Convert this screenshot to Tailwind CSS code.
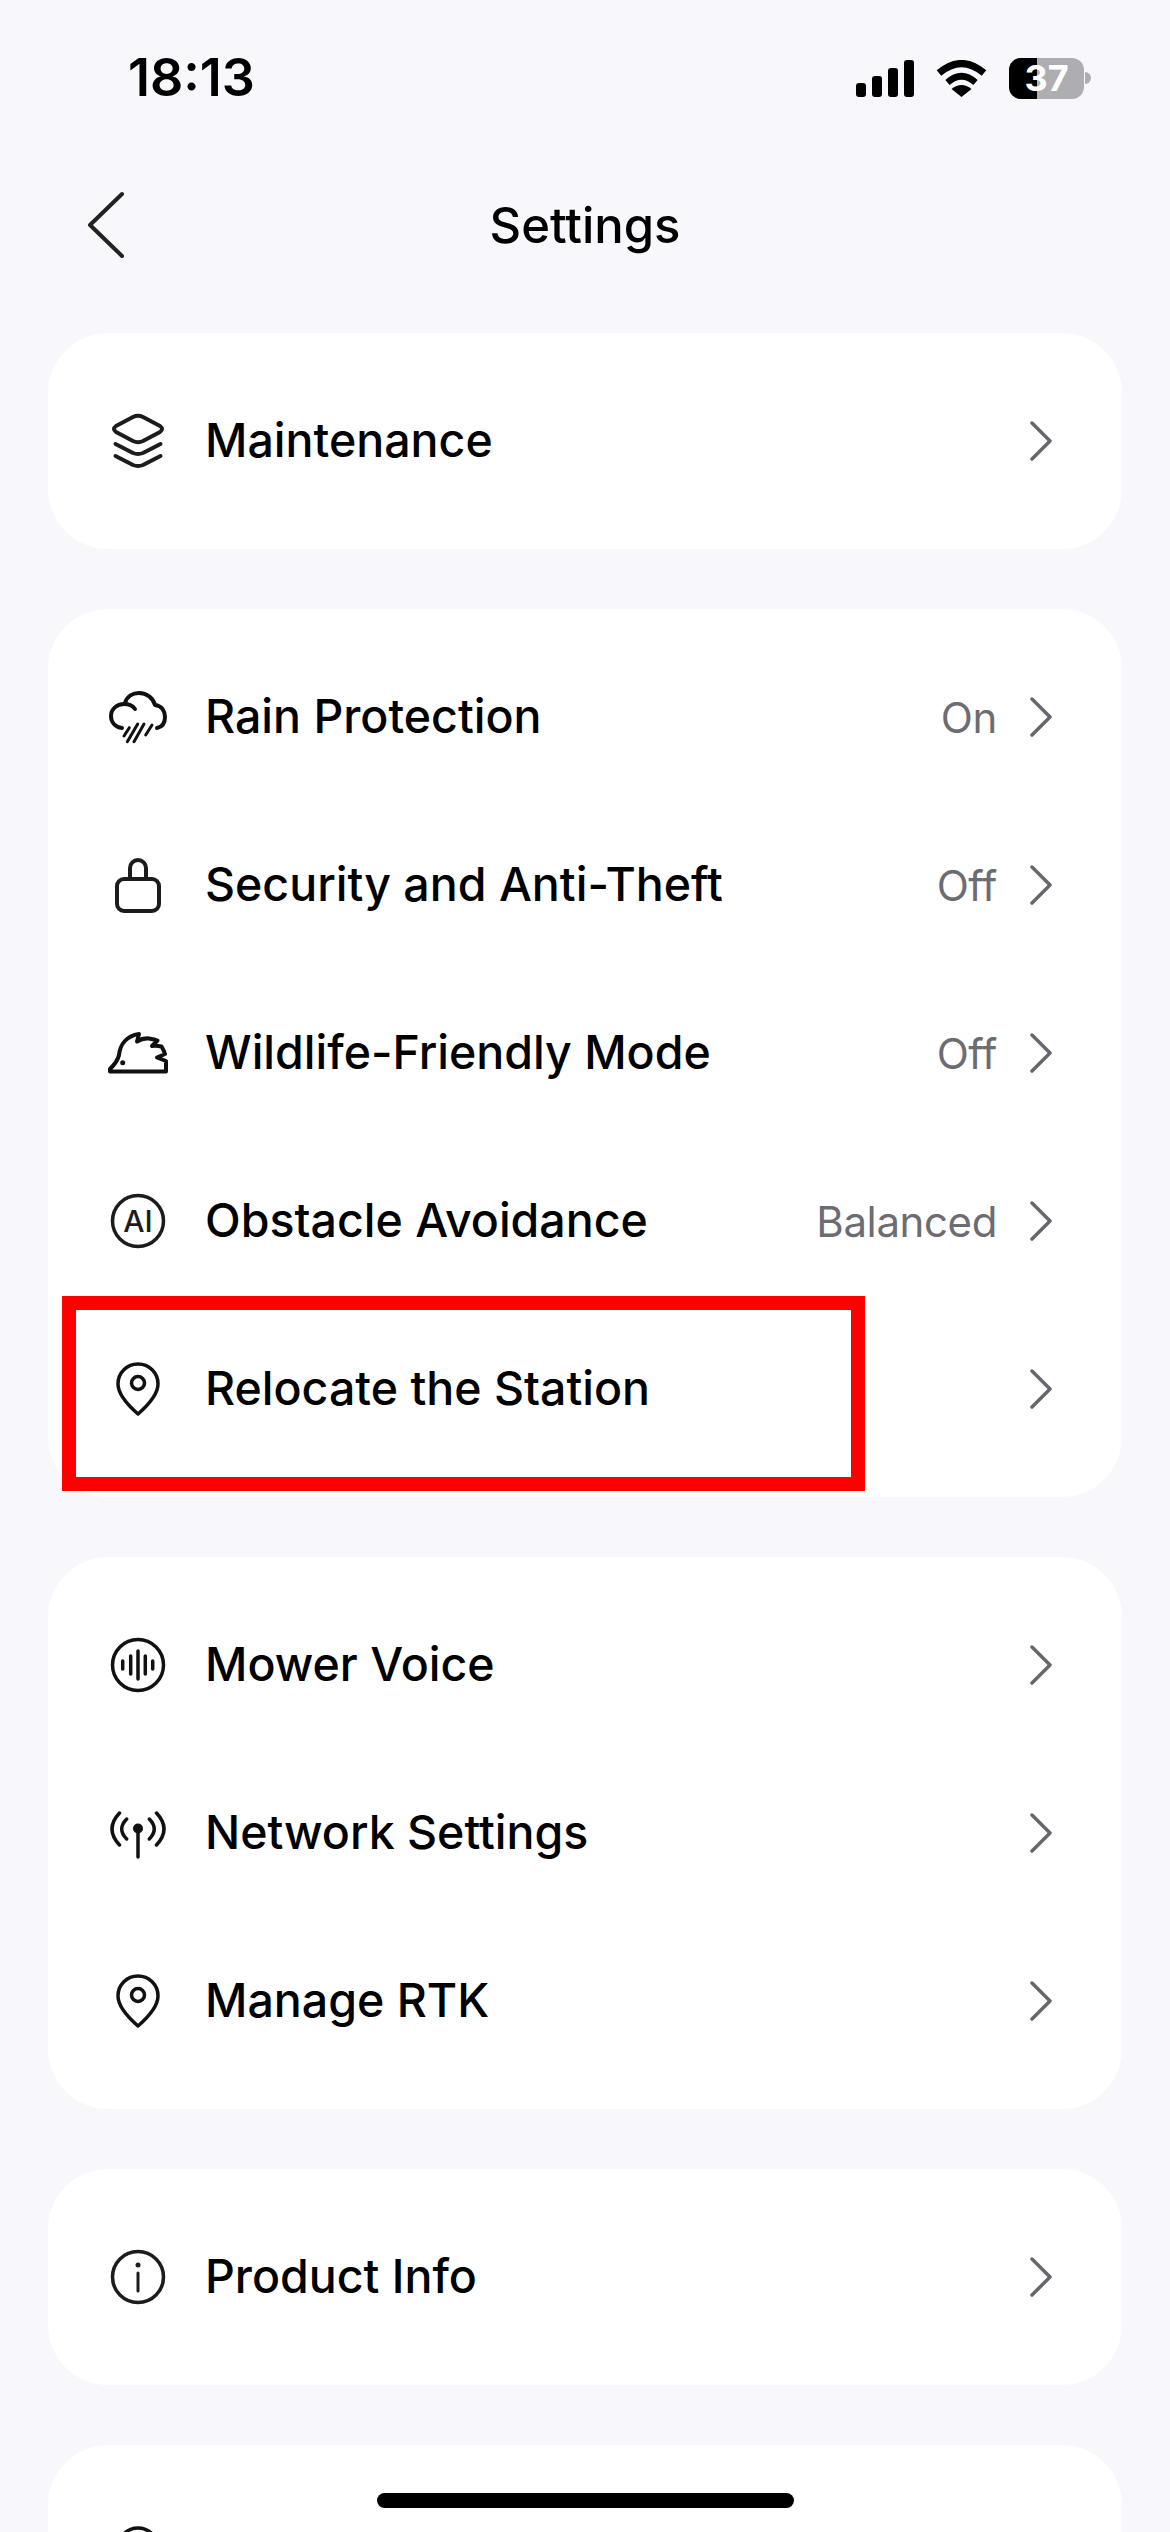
<!DOCTYPE html>
<html lang="en">
<head>
  <meta charset="UTF-8" />
  <meta name="viewport" content="width=device-width, initial-scale=1.0"/>
  <title>Settings</title>
  <script src="https://cdn.jsdelivr.net/npm/@tailwindcss/browser@4"></script>
</head>
<body class="bg-[#f7f7fc] font-[Inter,sans-serif] text-black">
<div class="relative w-[1170px] h-[2532px] overflow-hidden">

  <!-- Status bar -->
  <div class="h-[156px] flex items-center justify-between pl-[128px] pr-[79px]">
    <span class="text-[52px] font-semibold text-black">18:13</span>
    <div class="flex items-center gap-[22px]">
      <div class="flex items-end gap-[6px]">
        <div class="w-[10px] h-[14px] rounded-[3px] bg-black"></div>
        <div class="w-[10px] h-[21px] rounded-[3px] bg-black"></div>
        <div class="w-[10px] h-[29px] rounded-[3px] bg-black"></div>
        <div class="w-[10px] h-[37px] rounded-[3px] bg-black"></div>
      </div>
      <svg width="51" height="37" viewBox="0 0 51 37" fill="none" stroke="black">
        <path d="M3 13 Q25.5 -6 48 13" stroke-width="7"/>
        <path d="M11.5 22.5 Q25.5 10 39.500 22.500" stroke-width="6.500"/>
        <path d="M25.500 37 L15.500 29 Q25.500 21 35.500 29 Z" fill="black" stroke="none"/>
      </svg>
      <div class="flex items-center gap-[1px]">
        <div class="relative w-[75px] h-[41px] rounded-[12px] overflow-hidden bg-[#aeaeb2]">
          <div class="w-[28px] h-full bg-black"></div>
          <span class="absolute inset-0 flex items-center justify-center text-[36px] leading-none font-bold text-white">37</span>
        </div>
        <div class="w-[6px] h-[12px] rounded-r-full bg-[#aeaeb2]"></div>
      </div>
    </div>
  </div>

  <!-- Nav bar -->
  <div class="relative h-[140px] mb-[37px] flex items-center justify-center">
    <svg class="absolute left-[84px] top-[32px]" width="44" height="76" viewBox="0 0 44 76" fill="none" stroke="#222" stroke-width="4" stroke-linecap="round" stroke-linejoin="round">
      <path d="M38 6 L6 37 L38 68"/>
    </svg>
    <h1 class="text-[49px] font-medium text-black">Settings</h1>
  </div>

  <!-- Cards -->
  <div class="flex flex-col gap-[60px] px-[48px]">

    <div class="bg-white rounded-[60px] py-[24px]">
      <div class="h-[168px] flex items-center pl-[58px] pr-[70px]">
        <svg class="mr-[35px]" width="64" height="64" viewBox="0 0 64 64" fill="none" stroke="#1c1c1c" stroke-width="4" stroke-linecap="round" stroke-linejoin="round">
          <path d="M27 8 Q32 5.500 37 8 L54 17 Q58 20 54 23 L37 32 Q32 34.500 27 32 L10 23 Q6 20 10 17 Z"/>
          <path d="M9.500 35 L27 44 Q32 46 37 44 L54.500 35"/>
          <path d="M9.500 47 L27 56 Q32 58 37 56 L54.500 47"/>
        </svg>
        <span class="flex-1 text-[46.5px] font-[450]">Maintenance</span>
        <svg width="22" height="40" viewBox="0 0 22 40" fill="none" stroke="#66666c" stroke-width="3.500" stroke-linecap="round" stroke-linejoin="round"><path d="M2 2 L20 20 L2 38"/></svg>
      </div>
    </div>

    <div class="relative bg-white rounded-[60px] py-[24px]">
      <div class="h-[168px] flex items-center pl-[58px] pr-[70px]">
        <svg class="mr-[35px]" width="64" height="64" viewBox="0 0 64 64" fill="none" stroke="#111" stroke-width="4" stroke-linecap="round" stroke-linejoin="round">
          <path d="M16 43 C9 42 5 37 5 31 C5 24 11 19 18 19 C23 19 27 21 29 24"/>
          <path d="M19 18 C21 11 27 8 33 8 C41 8 47 13 49 20 C56 21 59 26 59 32 C59 38 56 42 51 43"/>
          <path d="M18 51 L23.300 42.700 M21.300 56.700 L31.700 39 M28 56.700 L38 39 M39.700 50 L46 40" stroke-width="3"/>
        </svg>
        <span class="flex-1 text-[46.5px] font-[450]">Rain Protection</span>
        <span class="mr-[33px] text-[42px] tracking-[-0.4px] text-[#6c6c72]">On</span>
        <svg width="22" height="40" viewBox="0 0 22 40" fill="none" stroke="#66666c" stroke-width="3.500" stroke-linecap="round" stroke-linejoin="round"><path d="M2 2 L20 20 L2 38"/></svg>
      </div>
      <div class="h-[168px] flex items-center pl-[58px] pr-[70px]">
        <svg class="mr-[35px]" width="64" height="64" viewBox="0 0 64 64" fill="none" stroke="#1c1c1c" stroke-width="4" stroke-linecap="round" stroke-linejoin="round">
          <rect x="11" y="26" width="42" height="32" rx="7"/>
          <path d="M24 26 V15 a8 8 0 0 1 16 0 V26"/>
        </svg>
        <span class="flex-1 text-[46.5px] font-[450]">Security and Anti-Theft</span>
        <span class="mr-[33px] text-[42px] tracking-[-0.4px] text-[#6c6c72]">Off</span>
        <svg width="22" height="40" viewBox="0 0 22 40" fill="none" stroke="#66666c" stroke-width="3.500" stroke-linecap="round" stroke-linejoin="round"><path d="M2 2 L20 20 L2 38"/></svg>
      </div>
      <div class="h-[168px] flex items-center pl-[58px] pr-[70px]">
        <svg class="mr-[35px]" width="64" height="64" viewBox="0 0 64 64" fill="none" stroke="#111" stroke-width="4" stroke-linecap="round" stroke-linejoin="round">
          <path d="M4 50.500 L4 48 C9 43 12 39 13 34 C14 24 20 15 33 13 L31 20.500 C35 18 39 17 43 17.500 C46 18 49 18.500 51.500 19.500 L46 25 C50 24.500 53 25 55.500 25.500 C57 28 58.500 31 59 33 L51 36.500 L60 40 V50.500 Z"/>
          <circle cx="16.700" cy="41.700" r="2.500" fill="#111" stroke="none"/>
        </svg>
        <span class="flex-1 text-[46.5px] font-[450]">Wildlife-Friendly Mode</span>
        <span class="mr-[33px] text-[42px] tracking-[-0.4px] text-[#6c6c72]">Off</span>
        <svg width="22" height="40" viewBox="0 0 22 40" fill="none" stroke="#66666c" stroke-width="3.500" stroke-linecap="round" stroke-linejoin="round"><path d="M2 2 L20 20 L2 38"/></svg>
      </div>
      <div class="h-[168px] flex items-center pl-[58px] pr-[70px]">
        <svg class="mr-[35px]" width="64" height="64" viewBox="0 0 64 64" fill="none" stroke="#1c1c1c" stroke-width="3.500">
          <circle cx="32" cy="32" r="25.500"/>
          <text x="32" y="43" text-anchor="middle" font-size="30" font-weight="500" fill="#1c1c1c" stroke="none">AI</text>
        </svg>
        <span class="flex-1 text-[46.5px] font-[450]">Obstacle Avoidance</span>
        <span class="mr-[33px] text-[42px] tracking-[-0.4px] text-[#6c6c72]">Balanced</span>
        <svg width="22" height="40" viewBox="0 0 22 40" fill="none" stroke="#66666c" stroke-width="3.500" stroke-linecap="round" stroke-linejoin="round"><path d="M2 2 L20 20 L2 38"/></svg>
      </div>
      <div class="h-[168px] flex items-center pl-[58px] pr-[70px]">
        <svg class="mr-[35px]" width="64" height="64" viewBox="0 0 64 64" fill="none" stroke="#111" stroke-width="3.500" stroke-linejoin="round">
          <path d="M32 57 C24 50 12 38 12 27 a20 20 0 0 1 40 0 C52 38 40 50 32 57 Z"/>
          <circle cx="32" cy="26" r="6.500"/>
        </svg>
        <span class="flex-1 text-[46.5px] font-[450]">Relocate the Station</span>
        <svg width="22" height="40" viewBox="0 0 22 40" fill="none" stroke="#66666c" stroke-width="3.500" stroke-linecap="round" stroke-linejoin="round"><path d="M2 2 L20 20 L2 38"/></svg>
      </div>
      <!-- Red highlight annotation -->
      <div class="absolute left-[14px] top-[687px] w-[803px] h-[195px] border-[14px] border-[#ff0000]"></div>
    </div>

    <div class="bg-white rounded-[60px] py-[24px]">
      <div class="h-[168px] flex items-center pl-[58px] pr-[70px]">
        <svg class="mr-[35px]" width="64" height="64" viewBox="0 0 64 64" fill="none" stroke="#111" stroke-width="3.500" stroke-linecap="round">
          <circle cx="32" cy="32" r="25.500"/>
          <path d="M16.700 28 V36 M24.700 23 V41 M32 18 V46 M39.300 23 V41 M46.700 28 V36"/>
        </svg>
        <span class="flex-1 text-[46.5px] font-[450]">Mower Voice</span>
        <svg width="22" height="40" viewBox="0 0 22 40" fill="none" stroke="#66666c" stroke-width="3.500" stroke-linecap="round" stroke-linejoin="round"><path d="M2 2 L20 20 L2 38"/></svg>
      </div>
      <div class="h-[168px] flex items-center pl-[58px] pr-[70px]">
        <svg class="mr-[35px]" width="64" height="64" viewBox="0 0 64 64" fill="none" stroke="#111" stroke-width="3.500" stroke-linecap="round">
          <circle cx="32" cy="27.500" r="5" fill="#111" stroke="none"/>
          <path d="M32 28 V56"/>
          <path d="M20.700 18 Q10.700 28 20.700 38 M43.300 18 Q53.300 28 43.300 38"/>
          <path d="M13.500 12 Q-1.500 28 13.500 44 M50.500 12 Q65.500 28 50.500 44"/>
        </svg>
        <span class="flex-1 text-[46.5px] font-[450]">Network Settings</span>
        <svg width="22" height="40" viewBox="0 0 22 40" fill="none" stroke="#66666c" stroke-width="3.500" stroke-linecap="round" stroke-linejoin="round"><path d="M2 2 L20 20 L2 38"/></svg>
      </div>
      <div class="h-[168px] flex items-center pl-[58px] pr-[70px]">
        <svg class="mr-[35px]" width="64" height="64" viewBox="0 0 64 64" fill="none" stroke="#111" stroke-width="3.500" stroke-linejoin="round">
          <path d="M32 57 C24 50 12 38 12 27 a20 20 0 0 1 40 0 C52 38 40 50 32 57 Z"/>
          <circle cx="32" cy="26" r="6.500"/>
        </svg>
        <span class="flex-1 text-[46.5px] font-[450]">Manage RTK</span>
        <svg width="22" height="40" viewBox="0 0 22 40" fill="none" stroke="#66666c" stroke-width="3.500" stroke-linecap="round" stroke-linejoin="round"><path d="M2 2 L20 20 L2 38"/></svg>
      </div>
    </div>

    <div class="bg-white rounded-[60px] py-[24px]">
      <div class="h-[168px] flex items-center pl-[58px] pr-[70px]">
        <svg class="mr-[35px]" width="64" height="64" viewBox="0 0 64 64" fill="none" stroke="#1c1c1c" stroke-width="3.500" stroke-linecap="round">
          <circle cx="32" cy="32" r="25.500"/>
          <circle cx="32" cy="20" r="2.500" fill="#1c1c1c" stroke="none"/>
          <path d="M32 28 V46" stroke-width="3"/>
        </svg>
        <span class="flex-1 text-[46.5px] font-[450]">Product Info</span>
        <svg width="22" height="40" viewBox="0 0 22 40" fill="none" stroke="#66666c" stroke-width="3.500" stroke-linecap="round" stroke-linejoin="round"><path d="M2 2 L20 20 L2 38"/></svg>
      </div>
    </div>

    <!-- Cut off by the bottom of the screen -->
    <div class="bg-white rounded-[60px] py-[24px]">
      <div class="h-[168px] flex items-center pl-[58px] pr-[70px]">
        <svg width="64" height="64" viewBox="0 0 64 64" fill="none" stroke="#111" stroke-width="3.500" stroke-linejoin="round">
          <path d="M32 57 C24 50 12 38 12 27 a20 20 0 0 1 40 0 C52 38 40 50 32 57 Z"/>
        </svg>
      </div>
    </div>
  </div>

  <!-- Home indicator -->
  <div class="absolute left-[377px] top-[2493px] w-[417px] h-[15px] rounded-full bg-black"></div>
</div>
</body>
</html>
